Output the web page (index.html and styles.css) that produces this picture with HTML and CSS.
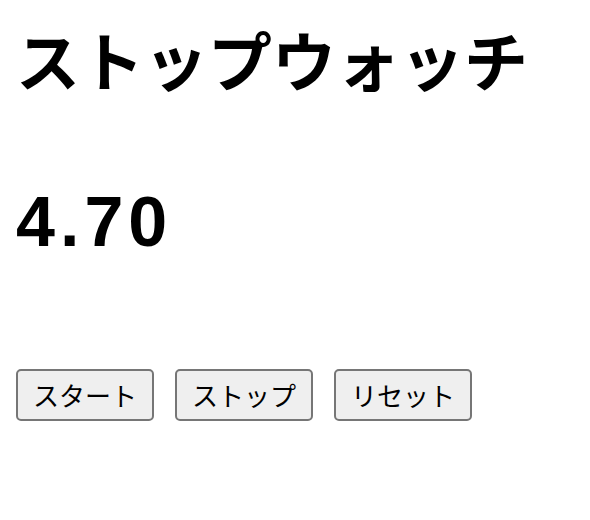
FILE: index.html
```html
<!DOCTYPE html>
<html lang="ja">
<head>
<meta charset="utf-8">
<title>ストップウォッチ</title>
<link rel="stylesheet" href="styles.css">
</head>
<body>
<main class="app">
  <h1 class="title">ストップウォッチ</h1>
  <h1 class="time">4.70</h1>
  <div class="controls">
    <button class="btn" type="button">スタート</button>
    <button class="btn" type="button">ストップ</button>
    <button class="btn" type="button">リセット</button>
  </div>
</main>
</body>
</html>
```

FILE: styles.css
```css
html, body {
  margin: 0;
  padding: 0;
  background: #ffffff;
}

body {
  font-family: "Noto Sans CJK JP", "Noto Sans", sans-serif;
  color: #000;
}

.app {
  display: flex;
  flex-direction: column;
  align-items: flex-start;
  padding: 0 16px;
}

.title {
  margin: 22px 0 0 0;
  font-size: 64px;
  font-weight: 700;
  line-height: 72px;
  white-space: nowrap;
}

.time {
  margin: 92px 0 0 0;
  font-family: "Liberation Sans", Arial, sans-serif;
  font-size: 70px;
  font-weight: 700;
  line-height: 72px;
  letter-spacing: 5px;
}

.controls {
  display: flex;
  gap: 21px;
  margin-top: 111px;
}

.btn {
  box-sizing: border-box;
  height: 52px;
  padding: 0 15px;
  border: 2px solid #767676;
  border-radius: 5px;
  background: #efefef;
  color: #000;
  font-family: "Noto Sans CJK JP", sans-serif;
  font-size: 26px;
  line-height: 1;
}
```
